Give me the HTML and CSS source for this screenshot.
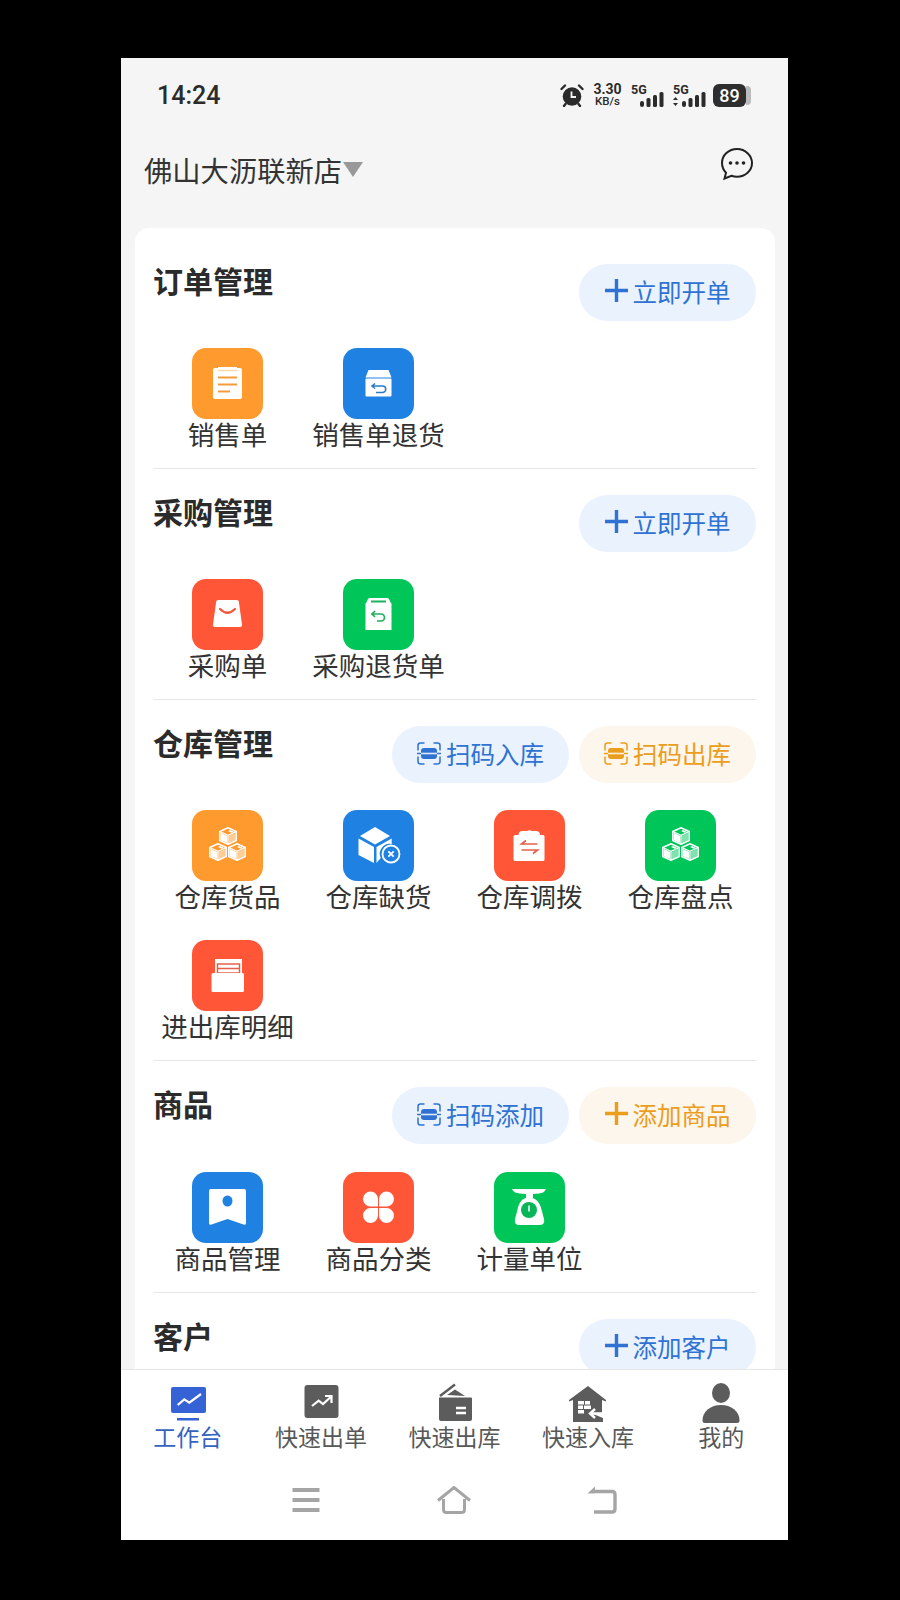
FILE: index.html
```html
<!DOCTYPE html>
<html lang="zh-CN">
<head>
  <meta charset="UTF-8" />
  <meta name="viewport" content="width=device-width, initial-scale=1.0"/>
  <title>工作台</title>
  <link rel="stylesheet" href="styles.css">
</head>
<body>

<svg class="defs" width="0" height="0">
  <symbol id="plus" viewBox="0 0 23 23">
    <path d="M11.5 0v23M0 11.5h23" fill="none" stroke="currentColor" stroke-width="3.4"/>
  </symbol>
  <symbol id="scan" viewBox="0 0 24 23">
    <path d="M7.500 1H3.500Q1 1 1 3.500V8.500M16.500 1h4Q23 1 23 3.500V8.500M7.500 22H3.500Q1 22 1 19.500V14.500M16.500 22h4q2.500 0 2.500-2.500V14.500" fill="none" stroke="currentColor" stroke-width="1.500"/>
    <path d="M0 11.500h24" stroke="currentColor" stroke-width="1.500"/>
    <rect x="4" y="6" width="16" height="11" rx="3" fill="currentColor"/>
    <rect x="4" y="10.700" width="16" height="1.600" fill="#fff" fill-opacity=".85"/>
  </symbol>
  <symbol id="cube" viewBox="0 0 18 18">
    <path d="M9 .8l8.200 3.700v9L9 17.200.8 13.500v-9z" fill="none" stroke="#fff" stroke-width="1.500" stroke-linejoin="round"/>
    <path d="M.8 4.500L9 8.400l8.200-3.900M9 8.400v8.800" fill="none" stroke="#fff" stroke-width="1.200"/>
    <path d="M1.600 5.800L8.300 9v7L1.600 12.900zM11 3l3.800 1.700-2 1-3.800-1.800z" fill="#fff"/>
    <path d="M9.700 9l6.700-3.200v7.100L9.700 16z" fill="#fff" fill-opacity=".5"/>
  </symbol>
</svg>

<div class="phone">
  <div class="status-bar">
    <span class="clock">14:24</span>
    <div class="status-icons">
      <svg class="alarm" viewBox="0 0 24 23" width="24" height="23">
        <circle cx="12" cy="12.500" r="9.300" fill="#2b2b2b"/>
        <path d="M11.500 7.500V13H16" fill="none" stroke="#f5f5f5" stroke-width="1.800"/>
        <path d="M1.500 5L5 1.500M22.500 5L19 1.500M5.500 20L4 22M18.500 20L20 22" stroke="#2b2b2b" stroke-width="2.400" fill="none" stroke-linecap="round"/>
      </svg>
      <div class="net-speed"><b>3.30</b><span>KB/s</span></div>
      <div class="signal">
        <span class="five-g">5G</span>
        <svg viewBox="0 0 24 15" width="24" height="15">
          <rect x="0" y="9" width="4" height="6" rx="2" fill="#2b2b2b"/>
          <rect x="6.500" y="6" width="4" height="9" rx="1.500" fill="#2b2b2b"/>
          <rect x="13" y="3" width="4" height="12" rx="1.500" fill="#2b2b2b"/>
          <rect x="19.500" y="0" width="4" height="15" rx="1.500" fill="#2b2b2b"/>
        </svg>
      </div>
      <div class="signal signal-wide">
        <span class="five-g">5G</span>
        <svg viewBox="0 0 33 15" width="33" height="15">
          <path d="M2.500 5L5 8H0zM2.500 14L0 11H5z" fill="#2b2b2b"/>
          <rect x="9" y="9" width="4" height="6" rx="2" fill="#2b2b2b"/>
          <rect x="15.500" y="6" width="4" height="9" rx="1.500" fill="#2b2b2b"/>
          <rect x="22" y="3" width="4" height="12" rx="1.500" fill="#2b2b2b"/>
          <rect x="28.500" y="0" width="4" height="15" rx="1.500" fill="#2b2b2b"/>
        </svg>
      </div>
      <div class="battery"><span class="battery-level">89</span><span class="battery-tip"></span></div>
    </div>
  </div>

  <div class="store-bar">
    <div class="store-name">佛山大沥联新店<span class="caret"></span></div>
    <svg class="chat" viewBox="0 0 34 34" width="34" height="34">
      <path d="M17 2C8.700 2 2 8.200 2 16c0 3.800 1.500 7.100 4 9.700L4.500 31.500l7-2.700c1.700.6 3.500.9 5.500.9 8.300 0 15-6.100 15-13.700S25.300 2 17 2z" fill="none" stroke="#222" stroke-width="2"/>
      <circle cx="10.500" cy="16" r="1.800" fill="#222"/>
      <circle cx="17" cy="16" r="1.800" fill="#222"/>
      <circle cx="23.500" cy="16" r="1.800" fill="#222"/>
    </svg>
  </div>

  <div class="content">
    <div class="card">

      <section class="section">
        <div class="section-head">
          <h3>订单管理</h3>
          <div class="actions">
            <a class="pill pill-blue"><svg class="plus"><use href="#plus"/></svg>立即开单</a>
          </div>
        </div>
        <div class="entries">
          <div class="entry">
            <div class="tile orange">
              <svg viewBox="0 0 71 71">
                <path d="M21 22q0-2 2-2h3v-1h19v1h3q2 0 2 2v27q0 2-2 2H23q-2 0-2-2z" fill="#fff"/>
                <path d="M26 22.500h19" stroke="#ffd9a8" stroke-width="1.500"/>
                <path d="M26 29.500h19M26 36.500h19M26 43.500h12" stroke="#f59b3c" stroke-width="1.800"/>
              </svg>
            </div>
            <span>销售单</span>
          </div>
          <div class="entry">
            <div class="tile blue">
              <svg viewBox="0 0 71 71">
                <path d="M25.500 22h20l3 7.500h-26z" fill="#fff"/>
                <rect x="22.500" y="30.500" width="26" height="18" rx="1" fill="#fff"/>
                <path d="M32 35.500L29 38l3 2.500M29 38h10.500a3 3 0 0 1 0 6.500H33" fill="none" stroke="#2a7cc9" stroke-width="1.600"/>
              </svg>
            </div>
            <span>销售单退货</span>
          </div>
        </div>
      </section>

      <section class="section">
        <div class="section-head">
          <h3>采购管理</h3>
          <div class="actions">
            <a class="pill pill-blue"><svg class="plus"><use href="#plus"/></svg>立即开单</a>
          </div>
        </div>
        <div class="entries">
          <div class="entry">
            <div class="tile red">
              <svg viewBox="0 0 71 71">
                <path d="M26 21h19q1.500 0 1.800 1.500L50 45.500q.3 2.500-2 2.500H23q-2.300 0-2-2.500l3.200-23Q24.500 21 26 21z" fill="#fff"/>
                <path d="M28 30q7.500 7.500 15 0" fill="none" stroke="#f0583e" stroke-width="2.200" stroke-linecap="round"/>
              </svg>
            </div>
            <span>采购单</span>
          </div>
          <div class="entry">
            <div class="tile green">
              <svg viewBox="0 0 71 71">
                <path d="M27 19h17q2 0 2.500 2t2 3.500V51h-26V24.500q1.500-1.500 2-3.500T27 19z" fill="#fff"/>
                <path d="M28 22.500h15" stroke="#1fb05e" stroke-width="2"/>
                <path d="M32 32l-3 3 3 3M29 35h9a3.500 3.500 0 0 1 0 7h-4" fill="none" stroke="#1fb05e" stroke-width="1.700"/>
              </svg>
            </div>
            <span>采购退货单</span>
          </div>
        </div>
      </section>

      <section class="section">
        <div class="section-head">
          <h3>仓库管理</h3>
          <div class="actions">
            <a class="pill pill-blue"><svg class="scan"><use href="#scan"/></svg>扫码入库</a>
            <a class="pill pill-orange"><svg class="scan"><use href="#scan"/></svg>扫码出库</a>
          </div>
        </div>
        <div class="entries">
          <div class="entry">
            <div class="tile orange">
              <svg viewBox="0 0 71 71">
                <use href="#cube" x="27" y="17" width="18" height="18"/>
                <use href="#cube" x="17" y="33" width="18" height="18"/>
                <use href="#cube" x="36" y="33" width="18" height="18"/>
              </svg>
            </div>
            <span>仓库货品</span>
          </div>
          <div class="entry">
            <div class="tile blue">
              <svg viewBox="0 0 71 71">
                <path d="M32 17l15 9-15 8.500L17 26z" fill="#fff"/>
                <path d="M15.500 28.500L31 37v16l-15.500-8zM33.500 37L48.700 28.500V34a10 10 0 0 0-11 14L33.500 53z" fill="#fff"/>
                <circle cx="48" cy="44" r="8.500" fill="#1f82e2" stroke="#fff" stroke-width="1.800"/>
                <path d="M45.300 41.300l5.400 5.400M50.700 41.300l-5.400 5.400" stroke="#fff" stroke-width="1.800"/>
              </svg>
            </div>
            <span>仓库缺货</span>
          </div>
          <div class="entry">
            <div class="tile red">
              <svg viewBox="0 0 71 71">
                <path d="M24.500 25q0-4 4-4h4.500q2.500-1.500 5 0h4q4 0 4 4h3q1.500 0 1.500 1.500V49.500q0 1.500-1.500 1.500H21q-1.500 0-1.500-1.500V26.500q0-1.500 1.500-1.500z" fill="#fff"/>
                <path d="M32 30.500l-4.500 3.500h16M27.500 40h16l-4.500 3.500" fill="none" stroke="#e4604a" stroke-width="1.700"/>
              </svg>
            </div>
            <span>仓库调拨</span>
          </div>
          <div class="entry">
            <div class="tile green">
              <svg viewBox="0 0 71 71">
                <use href="#cube" x="27" y="17" width="18" height="18"/>
                <use href="#cube" x="17" y="33" width="18" height="18"/>
                <use href="#cube" x="36" y="33" width="18" height="18"/>
              </svg>
            </div>
            <span>仓库盘点</span>
          </div>
          <div class="entry">
            <div class="tile red">
              <svg viewBox="0 0 71 71">
                <path d="M23 19h27v14H23z" fill="#fff"/>
                <path d="M25.500 24h22v9h-22zM25.500 28.500h22" fill="none" stroke="#e4604a" stroke-width="1.500"/>
                <rect x="19.500" y="33" width="32.500" height="19" rx="1.500" fill="#fff"/>
              </svg>
            </div>
            <span>进出库明细</span>
          </div>
        </div>
      </section>

      <section class="section section-goods">
        <div class="section-head">
          <h3>商品</h3>
          <div class="actions">
            <a class="pill pill-blue"><svg class="scan"><use href="#scan"/></svg>扫码添加</a>
            <a class="pill pill-orange"><svg class="plus"><use href="#plus"/></svg>添加商品</a>
          </div>
        </div>
        <div class="entries">
          <div class="entry">
            <div class="tile blue">
              <svg viewBox="0 0 71 71">
                <path d="M19 17h33q2 0 2 2v32q0 2.500-2.500 1.500L35.500 47l-16 5.500Q17 53.500 17 51V19q0-2 2-2z" fill="#fff"/>
                <ellipse cx="35.500" cy="29" rx="5" ry="5.500" fill="#1f82e2"/>
              </svg>
            </div>
            <span>商品管理</span>
          </div>
          <div class="entry">
            <div class="tile red">
              <svg viewBox="0 0 71 71">
                <path d="M27.500 19.500a7.500 7.500 0 0 1 7.500 7.500v7.500h-7.500a7.500 7.500 0 0 1 0-15zM43.500 19.500a7.500 7.500 0 0 1 0 15H36V27a7.500 7.500 0 0 1 7.500-7.500zM35 36v7.500a7.500 7.500 0 1 1-7.500-7.500zM36 36h7.500a7.500 7.500 0 1 1-7.500 7.500z" fill="#fff"/>
              </svg>
            </div>
            <span>商品分类</span>
          </div>
          <div class="entry">
            <div class="tile green">
              <svg viewBox="0 0 71 71">
                <path d="M18 17h34q-1.500 4-7 4.500L39 22v4h-7v-4l-6-.5Q19.500 21 18 17z" fill="#fff"/>
                <path d="M35 25.500c7 0 11 5 12.500 12L50 47q1.200 6-4.500 6h-20Q19.800 53 21 47l2.500-9.500C25 30.500 28 25.500 35 25.500z" fill="#fff"/>
                <circle cx="35" cy="38" r="8" fill="#08b558"/>
                <path d="M35 33.500v6" stroke="#fff" stroke-width="1.500"/>
              </svg>
            </div>
            <span>计量单位</span>
          </div>
        </div>
      </section>

      <section class="section">
        <div class="section-head">
          <h3>客户</h3>
          <div class="actions">
            <a class="pill pill-blue"><svg class="plus"><use href="#plus"/></svg>添加客户</a>
          </div>
        </div>
      </section>

    </div>
  </div>

  <nav class="tabbar">
    <div class="tab tab-active">
      <svg viewBox="0 0 40 40" width="40" height="40">
        <rect x="3" y="4" width="35" height="26" rx="2" fill="#3563d6"/>
        <path d="M9.700 22L16.300 16.300L21.300 19.700L33 11" fill="none" stroke="#fff" stroke-width="2.200"/>
        <rect x="9" y="35" width="22" height="2.500" fill="#3563d6"/>
      </svg>
      <span>工作台</span>
    </div>
    <div class="tab">
      <svg viewBox="0 0 40 40" width="40" height="40">
        <rect x="3.500" y="2" width="34" height="33" rx="3" fill="#5c5c5c"/>
        <path d="M11 23L17.700 17.700L22 21L30 13.700M24 13h6.500v7" fill="none" stroke="#fff" stroke-width="2.200"/>
      </svg>
      <span>快速出单</span>
    </div>
    <div class="tab">
      <svg viewBox="0 0 40 40" width="40" height="40">
        <path d="M5 13L20 1.500" stroke="#5c5c5c" stroke-width="2.400" fill="none"/>
        <path d="M12 12l8-5.500L30 13z" fill="#5c5c5c"/>
        <path d="M4 14.500H36q1 0 1 1V36q0 2-2 2H6q-2 0-2-2z" fill="#5c5c5c"/>
        <path d="M21 25h10M21 30h10" stroke="#fff" stroke-width="2.400"/>
      </svg>
      <span>快速出库</span>
    </div>
    <div class="tab">
      <svg viewBox="0 0 40 40" width="40" height="40">
        <path d="M20 3L38 17v1.500L34 17V30H35L25 31l10 4v4H5V17l-4 1.500V17z" fill="#5c5c5c"/>
        <path d="M10 18h6v3.500h-6zM17 18h5v3.500h-5zM10 22.500h5v3.500h-5zM16 22.500h7v3.500h-7zM10 27h6v3.500h-6z" fill="#fff"/>
        <path d="M35 30.500H23M27 26l-5 4.500 5 4.500" fill="none" stroke="#fff" stroke-width="2.400"/>
      </svg>
      <span>快速入库</span>
    </div>
    <div class="tab">
      <svg viewBox="0 0 40 40" width="40" height="40">
        <ellipse cx="20" cy="10" rx="9" ry="10" fill="#5c5c5c"/>
        <path d="M1.500 37.500C1.500 28 10 22 20 22S38.500 28 38.500 37.500Q38.500 40 36 40H4Q1.500 40 1.500 37.500z" fill="#5c5c5c"/>
      </svg>
      <span>我的</span>
    </div>
  </nav>

  <div class="sys-nav">
    <svg viewBox="0 0 36 28" width="36" height="28">
      <path d="M4.500 4h27M4.500 14h27M4.500 24h27" stroke="#a5a5a5" stroke-width="4"/>
    </svg>
    <svg viewBox="0 0 36 28" width="36" height="28">
      <path d="M2 14.500L18 1.500L34 14.500M7.500 13v10.500q0 3 3 3h15q3 0 3-3V13" fill="none" stroke="#a5a5a5" stroke-width="3"/>
    </svg>
    <svg viewBox="0 0 36 28" width="36" height="28">
      <path d="M11 5.500H28q3 0 3 3V23q0 3-3 3H10" fill="none" stroke="#a5a5a5" stroke-width="3.400"/>
      <path d="M11 .5V7.500H3.500z" fill="#a5a5a5"/>
    </svg>
  </div>
</div>

</body>
</html>
```

FILE: styles.css
```css
* {
  box-sizing: border-box;
}

body {
  margin: 0;
  padding: 58px 0 60px 121px;
  background: #000;
  font-family: "Noto Sans", "Noto Sans CJK SC", sans-serif;
  color: #333;
}

.defs {
  display: block;
  height: 0;
}

.phone {
  width: 667px;
  height: 1482px;
  background: #f5f5f5;
  display: flex;
  flex-direction: column;
  overflow: hidden;
}

/* status bar */
.status-bar {
  height: 74px;
  flex: none;
  display: flex;
  align-items: center;
  justify-content: space-between;
  padding: 0 37px 0 36px;
}

.clock {
  font-family: Roboto, sans-serif;
  font-size: 25px;
  font-weight: 500;
  color: #2b2b2b;
}

.status-icons {
  display: flex;
  align-items: center;
  color: #2b2b2b;
}

.alarm {
  margin-right: 10px;
}

.net-speed {
  display: flex;
  flex-direction: column;
  align-items: center;
  font-family: Roboto, sans-serif;
  line-height: 12px;
  width: 27px;
  margin-right: 10px;
}

.net-speed b {
  font-size: 14px;
  font-weight: 700;
}

.net-speed span {
  font-size: 11.5px;
  font-weight: 500;
}

.signal {
  position: relative;
  width: 33px;
  height: 23px;
  margin-right: 9px;
  display: flex;
  justify-content: flex-end;
  align-items: flex-end;
}

.signal-wide {
  width: 33px;
  margin-right: 7px;
}

.five-g {
  position: absolute;
  left: 0;
  top: -2px;
  font-family: Roboto, sans-serif;
  font-size: 12.5px;
  font-weight: 700;
}

.signal-wide .five-g {
  left: 0;
}

.battery {
  display: flex;
  align-items: center;
}

.battery-level {
  width: 33px;
  height: 23px;
  background: #2e2e2e;
  border-radius: 6px;
  color: #fff;
  font-family: Roboto, sans-serif;
  font-size: 18px;
  font-weight: 500;
  line-height: 23px;
  text-align: center;
}

.battery-tip {
  width: 5px;
  height: 19px;
  background: #bbb;
  border-radius: 0 4px 4px 0;
}

/* store header */
.store-bar {
  height: 74px;
  flex: none;
  display: flex;
  align-items: center;
  justify-content: space-between;
  padding: 0 34px 0 23px;
}

.store-name {
  display: flex;
  align-items: center;
  font-size: 28.3px;
  color: #333;
}

.caret {
  margin-left: 1px;
  border-left: 10px solid transparent;
  border-right: 10px solid transparent;
  border-top: 15px solid #999;
}

.chat {
  margin-top: -10px;
}

/* card */
.content {
  flex: 1;
  min-height: 0;
  overflow: hidden;
  padding: 22px 13px 0 14px;
}

.card {
  background: #fff;
  border-radius: 14px;
  padding: 10px 18px 0 18px;
}

.section {
  padding: 26px 0 18px;
  border-bottom: 1px solid #e8e8e8;
}

.section:last-child {
  border-bottom: none;
}

.section-head {
  display: flex;
  justify-content: space-between;
  align-items: flex-start;
  margin-bottom: 27px;
}

.section-goods .section-head {
  margin-bottom: 28px;
}

h3 {
  margin: 1px 0 0;
  font-size: 30px;
  font-weight: 700;
  line-height: 34px;
  color: #2b2b2b;
}

.actions {
  display: flex;
  gap: 10px;
  margin-right: 1px;
}

.pill {
  width: 177px;
  height: 57px;
  padding-bottom: 2px;
  border-radius: 29px;
  display: flex;
  align-items: center;
  justify-content: center;
  gap: 5px;
  font-size: 24.5px;
}

.pill-blue {
  background: #eaf2fd;
  color: #2f72d4;
}

.pill-orange {
  background: #fdf6ec;
  color: #eb9d1c;
}

.plus {
  width: 23px;
  height: 23px;
  margin-bottom: 3px;
}

.scan {
  width: 24px;
  height: 23px;
}

.entries {
  display: grid;
  grid-template-columns: repeat(4, 151px);
  row-gap: 28px;
  margin-left: -1px;
}

.entry {
  display: flex;
  flex-direction: column;
  align-items: center;
  font-size: 26.5px;
  line-height: 30px;
  color: #333;
  white-space: nowrap;
}

.tile {
  width: 71px;
  height: 71px;
  border-radius: 14px;
  margin-bottom: 1px;
}

.tile svg {
  display: block;
  width: 71px;
  height: 71px;
}

.orange { background: #ff9a2e; }
.blue { background: #1f82e2; }
.red { background: #ff5638; }
.green { background: #00c65a; }

/* bottom tabs */
.tabbar {
  height: 91px;
  flex: none;
  display: flex;
  background: #fff;
  border-top: 1px solid #e6e6e6;
  padding-top: 13px;
}

.tab {
  flex: 1;
  display: flex;
  flex-direction: column;
  align-items: center;
  font-size: 23px;
  line-height: 28px;
  color: #585858;
}

.tab svg {
  display: block;
}

.tab-active {
  color: #3563c0;
}

.sys-nav {
  height: 80px;
  flex: none;
  background: #fff;
  display: flex;
  align-items: center;
  justify-content: center;
  gap: 112px;
  padding-right: 2px;
}
```
